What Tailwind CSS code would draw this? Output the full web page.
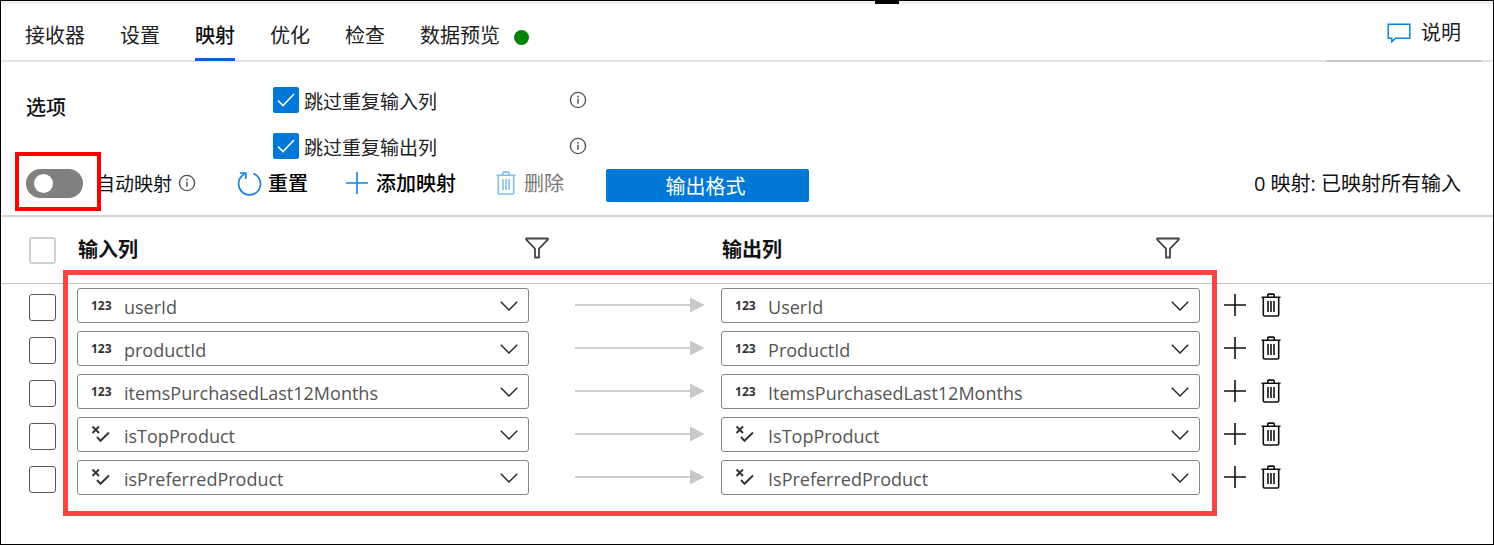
<!DOCTYPE html>
<html lang="zh-CN">
<head>
<meta charset="utf-8">
<meta name="viewport" content="width=device-width, initial-scale=1">
<title>映射</title>
<script src="https://cdn.jsdelivr.net/npm/@tailwindcss/browser@4"></script>
</head>
<body class="bg-white font-['Open_Sans','Noto_Sans_CJK_SC',sans-serif] text-[#222]">

<svg class="hidden" aria-hidden="true">
  <symbol id="info" viewBox="0 0 18 18" fill="none" stroke="currentColor"><circle cx="9" cy="9" r="7.6" stroke-width="1.4"/><path d="M9 7.8v5M9 4.8v1.6" stroke-width="1.5"/></symbol>
  <symbol id="plus" viewBox="0 0 22 22" fill="none" stroke="currentColor" stroke-width="1.6"><path d="M11 0v22M0 11h22"/></symbol>
  <symbol id="trash" viewBox="0 0 20 24" fill="none" stroke="currentColor" stroke-width="1.6"><path d="M.5 4.2h19M6.8 4V1.9q0-.8.8-.8h4.8q.8 0 .8.8V4M2.3 4.5v17.3q0 1.2 1.2 1.2h13q1.2 0 1.2-1.2V4.5M7 8v11M10 8v11M13 8v11"/></symbol>
  <symbol id="chevron" viewBox="0 0 18 10" fill="none" stroke="currentColor" stroke-width="1.4"><path d="M.8.8 9 9 17.2.8"/></symbol>
  <symbol id="funnel" viewBox="0 0 24 22" fill="none" stroke="currentColor" stroke-width="1.8" stroke-linejoin="round"><path d="M1.2 1.5h21.6v1.2L14 11.6v8.9h-4v-8.9L1.2 2.7z"/></symbol>
  <symbol id="arrow" viewBox="0 0 130 16"><path d="M0 8h116" stroke="#d0d0d0" stroke-width="2"/><path d="M115 .5 129.500 8 115 15.500z" fill="#c8c8c8"/></symbol>
  <symbol id="bool" viewBox="0 0 20 18" fill="none" stroke="currentColor" stroke-width="1.9"><path d="M1.500 1.500 8 8M8 1.500 1.500 8M6 12l3.500 3.800L18 7.500"/></symbol>
  <symbol id="tick" viewBox="0 0 18 14" fill="none" stroke="currentColor" stroke-width="1.6"><path d="m1 7.500 5 5L17 1"/></symbol>
</svg>

<div class="relative flex min-h-screen flex-col border border-black">
  <div class="h-[3px] bg-[#f1eff1]"></div>
  <div class="absolute left-[874px] top-0 h-[3px] w-6 bg-black"></div>

  <header class="flex h-[58px] items-stretch border-b-2 border-[#e2e2e2]">
    <nav class="-mb-px flex gap-[35px] pl-6 text-xl leading-[30px]">
      <a href="#" class="pt-[17px]">接收器</a>
      <a href="#" class="pt-[17px]">设置</a>
      <a href="#" aria-current="page" class="border-b-[3px] border-[#0a63c9] pt-[17px] font-medium text-[#111]">映射</a>
      <a href="#" class="pt-[17px]">优化</a>
      <a href="#" class="pt-[17px]">检查</a>
      <a href="#" class="flex items-start gap-[14px] pt-[17px]">数据预览<span class="mt-[9px] size-[15px] rounded-full bg-[#038303]"></span></a>
    </nav>
    <a href="#" class="-mb-[2px] ml-auto mr-[11px] flex w-[156px] items-start gap-[10px] border-b-2 border-[#c8c8c8] pl-[61px] pt-[14px] text-xl leading-[30px]">
      <svg class="mt-[5px] h-5 w-6 text-[#1182e0]" viewBox="0 0 24 20" fill="none" stroke="currentColor" stroke-width="1.500"><path d="M1.200 1.200h21.600v14H8.500L4.800 18.800v-3.600H1.200z"/></svg>
      说明
    </a>
  </header>

  <section class="flex pl-[25px] pt-[25px]">
    <h2 class="w-[247px] pt-[6px] text-xl font-medium leading-[30px] text-[#111]">选项</h2>
    <div class="flex flex-col gap-5">
      <div class="flex">
        <label class="flex w-[296px] gap-[5px] text-[19px] leading-[30px]">
          <span class="grid size-[26px] place-items-center">
            <input type="checkbox" checked class="col-start-1 row-start-1 size-[26px] appearance-none rounded-xs bg-[#0078d7]">
            <svg class="pointer-events-none col-start-1 row-start-1 h-[14px] w-[18px] text-white"><use href="#tick"/></svg>
          </span>
          <span class="h-[26px]">跳过重复输入列</span>
        </label>
        <svg class="mt-1 size-[18px] text-[#555]"><use href="#info"/></svg>
      </div>
      <div class="flex">
        <label class="flex w-[296px] gap-[5px] text-[19px] leading-[30px]">
          <span class="grid size-[26px] place-items-center">
            <input type="checkbox" checked class="col-start-1 row-start-1 size-[26px] appearance-none rounded-xs bg-[#0078d7]">
            <svg class="pointer-events-none col-start-1 row-start-1 h-[14px] w-[18px] text-white"><use href="#tick"/></svg>
          </span>
          <span class="h-[26px]">跳过重复输出列</span>
        </label>
        <svg class="mt-1 size-[18px] text-[#555]"><use href="#info"/></svg>
      </div>
    </div>
  </section>

  <section class="flex h-[56px] items-start pl-[25px] pr-8 pt-[10px] text-xl leading-[30px] whitespace-nowrap">
    <label class="relative flex text-[19px]">
      <input type="checkbox" role="switch" class="h-[29px] w-[57px] appearance-none rounded-full bg-[#808080] before:ml-2 before:mt-[5px] before:block before:size-[19px] before:rounded-full before:bg-white before:content-['']">
      <span class="pl-[13px] text-[#111]">自动映射</span>
      <span class="pointer-events-none absolute -left-[11px] -top-[17px] h-[59px] w-[86px] border-4 border-[#ff0000]"></span>
    </label>
    <svg class="ml-[6px] mt-[5px] size-[18px] text-[#555]"><use href="#info"/></svg>
    <button type="button" class="ml-[41px] flex gap-[6px] font-medium text-black">
      <svg class="mt-[2px] size-[25px] text-[#1182e0]" viewBox="0 0 25 25" fill="none" stroke="currentColor" stroke-width="1.700"><path d="M16.500 2.600A11 11 0 1 1 7.500 3.100M2.800 2h6v6"/></svg>
      重置
    </button>
    <button type="button" class="ml-[38px] flex gap-2 font-medium text-black">
      <svg class="mt-[3px] size-[22px] text-[#1182e0]"><use href="#plus"/></svg>
      添加映射
    </button>
    <button type="button" disabled class="ml-10 flex gap-2 text-[#777]">
      <svg class="mt-[2px] h-6 w-5 text-[#83bdee]"><use href="#trash"/></svg>
      删除
    </button>
    <button type="button" class="ml-[42px] h-[33px] w-[203px] rounded-xs bg-[#0078d7] pr-1 pt-[2px] text-white">输出格式</button>
    <p class="ml-auto text-[#111]">0 映射: 已映射所有输入</p>
  </section>

  <div class="relative">
    <table class="w-full table-fixed border-t-2 border-separate border-spacing-0 border-[#d4d4d4]">
      <colgroup><col class="w-[76px]"><col class="w-[30.3%]"><col class="w-[192px]"><col><col class="w-[293px]"></colgroup>
      <thead>
        <tr class="h-[67px] text-left text-xl leading-[30px] text-[#111] *:border-b *:border-[#c4c4c4]">
          <th class="p-0 pl-7"><input type="checkbox" aria-label="全选" class="block size-[27px] appearance-none rounded-[3px] border-2 border-[#d0d0d0]"></th>
          <th class="p-0 pl-px font-bold"><span class="flex items-center justify-between">输入列<button type="button" aria-label="筛选输入列" class="-mr-5 mb-1 text-[#444]"><svg class="block h-[22px] w-6"><use href="#funnel"/></svg></button></span></th>
          <th class="p-0"></th>
          <th class="p-0 pl-px font-bold"><span class="flex items-center justify-between pr-5">输出列<button type="button" aria-label="筛选输出列" class="mb-1 text-[#444]"><svg class="block h-[22px] w-6"><use href="#funnel"/></svg></button></span></th>
          <th class="p-0"></th>
        </tr>
      </thead>
      <tbody class="text-lg leading-[27px] text-[#555]">
        <tr class="h-[43px]">
          <td class="p-0 pl-7"><input type="checkbox" aria-label="选择 userId" class="mt-1 block size-[27px] appearance-none rounded-[3px] border border-[#555]"></td>
          <td class="p-0"><label class="flex h-[35px] items-center rounded-[3px] border border-[#858585] pl-3 pr-[10px]"><span class="w-[34px] pl-px text-xs font-bold text-[#333]">123</span><select aria-label="输入列 1" class="min-w-0 flex-1 appearance-none pt-[3px]"><option>userId</option></select><svg class="h-[10px] w-[18px] text-[#222]"><use href="#chevron"/></svg></label></td>
          <td class="p-0"><svg class="mb-[2px] ml-[46px] block h-4 w-[130px]"><use href="#arrow"/></svg></td>
          <td class="p-0"><label class="flex h-[35px] items-center rounded-[3px] border border-[#858585] pl-3 pr-[10px]"><span class="w-[34px] pl-px text-xs font-bold text-[#333]">123</span><select aria-label="输出列 1" class="min-w-0 flex-1 appearance-none pt-[3px]"><option>UserId</option></select><svg class="h-[10px] w-[18px] text-[#222]"><use href="#chevron"/></svg></label></td>
          <td class="p-0 pb-[2px]"><span class="flex items-center gap-[15px] pl-6 text-[#111]"><button type="button" aria-label="添加"><svg class="size-[22px]"><use href="#plus"/></svg></button><button type="button" aria-label="删除"><svg class="h-6 w-5"><use href="#trash"/></svg></button></span></td>
        </tr>
        <tr class="h-[43px]">
          <td class="p-0 pl-7"><input type="checkbox" aria-label="选择 productId" class="mt-1 block size-[27px] appearance-none rounded-[3px] border border-[#555]"></td>
          <td class="p-0"><label class="flex h-[35px] items-center rounded-[3px] border border-[#858585] pl-3 pr-[10px]"><span class="w-[34px] pl-px text-xs font-bold text-[#333]">123</span><select aria-label="输入列 2" class="min-w-0 flex-1 appearance-none pt-[3px]"><option>productId</option></select><svg class="h-[10px] w-[18px] text-[#222]"><use href="#chevron"/></svg></label></td>
          <td class="p-0"><svg class="mb-[2px] ml-[46px] block h-4 w-[130px]"><use href="#arrow"/></svg></td>
          <td class="p-0"><label class="flex h-[35px] items-center rounded-[3px] border border-[#858585] pl-3 pr-[10px]"><span class="w-[34px] pl-px text-xs font-bold text-[#333]">123</span><select aria-label="输出列 2" class="min-w-0 flex-1 appearance-none pt-[3px]"><option>ProductId</option></select><svg class="h-[10px] w-[18px] text-[#222]"><use href="#chevron"/></svg></label></td>
          <td class="p-0 pb-[2px]"><span class="flex items-center gap-[15px] pl-6 text-[#111]"><button type="button" aria-label="添加"><svg class="size-[22px]"><use href="#plus"/></svg></button><button type="button" aria-label="删除"><svg class="h-6 w-5"><use href="#trash"/></svg></button></span></td>
        </tr>
        <tr class="h-[43px]">
          <td class="p-0 pl-7"><input type="checkbox" aria-label="选择 itemsPurchasedLast12Months" class="mt-1 block size-[27px] appearance-none rounded-[3px] border border-[#555]"></td>
          <td class="p-0"><label class="flex h-[35px] items-center rounded-[3px] border border-[#858585] pl-3 pr-[10px]"><span class="w-[34px] pl-px text-xs font-bold text-[#333]">123</span><select aria-label="输入列 3" class="min-w-0 flex-1 appearance-none pt-[3px]"><option>itemsPurchasedLast12Months</option></select><svg class="h-[10px] w-[18px] text-[#222]"><use href="#chevron"/></svg></label></td>
          <td class="p-0"><svg class="mb-[2px] ml-[46px] block h-4 w-[130px]"><use href="#arrow"/></svg></td>
          <td class="p-0"><label class="flex h-[35px] items-center rounded-[3px] border border-[#858585] pl-3 pr-[10px]"><span class="w-[34px] pl-px text-xs font-bold text-[#333]">123</span><select aria-label="输出列 3" class="min-w-0 flex-1 appearance-none pt-[3px]"><option>ItemsPurchasedLast12Months</option></select><svg class="h-[10px] w-[18px] text-[#222]"><use href="#chevron"/></svg></label></td>
          <td class="p-0 pb-[2px]"><span class="flex items-center gap-[15px] pl-6 text-[#111]"><button type="button" aria-label="添加"><svg class="size-[22px]"><use href="#plus"/></svg></button><button type="button" aria-label="删除"><svg class="h-6 w-5"><use href="#trash"/></svg></button></span></td>
        </tr>
        <tr class="h-[43px]">
          <td class="p-0 pl-7"><input type="checkbox" aria-label="选择 isTopProduct" class="mt-1 block size-[27px] appearance-none rounded-[3px] border border-[#555]"></td>
          <td class="p-0"><label class="flex h-[35px] items-center rounded-[3px] border border-[#858585] pl-3 pr-[10px]"><span class="w-[34px] pl-px text-[#333]"><svg class="mb-[2px] block h-[18px] w-5"><use href="#bool"/></svg></span><select aria-label="输入列 4" class="min-w-0 flex-1 appearance-none pt-[3px]"><option>isTopProduct</option></select><svg class="h-[10px] w-[18px] text-[#222]"><use href="#chevron"/></svg></label></td>
          <td class="p-0"><svg class="mb-[2px] ml-[46px] block h-4 w-[130px]"><use href="#arrow"/></svg></td>
          <td class="p-0"><label class="flex h-[35px] items-center rounded-[3px] border border-[#858585] pl-3 pr-[10px]"><span class="w-[34px] pl-px text-[#333]"><svg class="mb-[2px] block h-[18px] w-5"><use href="#bool"/></svg></span><select aria-label="输出列 4" class="min-w-0 flex-1 appearance-none pt-[3px]"><option>IsTopProduct</option></select><svg class="h-[10px] w-[18px] text-[#222]"><use href="#chevron"/></svg></label></td>
          <td class="p-0 pb-[2px]"><span class="flex items-center gap-[15px] pl-6 text-[#111]"><button type="button" aria-label="添加"><svg class="size-[22px]"><use href="#plus"/></svg></button><button type="button" aria-label="删除"><svg class="h-6 w-5"><use href="#trash"/></svg></button></span></td>
        </tr>
        <tr class="h-[43px]">
          <td class="p-0 pl-7"><input type="checkbox" aria-label="选择 isPreferredProduct" class="mt-1 block size-[27px] appearance-none rounded-[3px] border border-[#555]"></td>
          <td class="p-0"><label class="flex h-[35px] items-center rounded-[3px] border border-[#858585] pl-3 pr-[10px]"><span class="w-[34px] pl-px text-[#333]"><svg class="mb-[2px] block h-[18px] w-5"><use href="#bool"/></svg></span><select aria-label="输入列 5" class="min-w-0 flex-1 appearance-none pt-[3px]"><option>isPreferredProduct</option></select><svg class="h-[10px] w-[18px] text-[#222]"><use href="#chevron"/></svg></label></td>
          <td class="p-0"><svg class="mb-[2px] ml-[46px] block h-4 w-[130px]"><use href="#arrow"/></svg></td>
          <td class="p-0"><label class="flex h-[35px] items-center rounded-[3px] border border-[#858585] pl-3 pr-[10px]"><span class="w-[34px] pl-px text-[#333]"><svg class="mb-[2px] block h-[18px] w-5"><use href="#bool"/></svg></span><select aria-label="输出列 5" class="min-w-0 flex-1 appearance-none pt-[3px]"><option>IsPreferredProduct</option></select><svg class="h-[10px] w-[18px] text-[#222]"><use href="#chevron"/></svg></label></td>
          <td class="p-0 pb-[2px]"><span class="flex items-center gap-[15px] pl-6 text-[#111]"><button type="button" aria-label="添加"><svg class="size-[22px]"><use href="#plus"/></svg></button><button type="button" aria-label="删除"><svg class="h-6 w-5"><use href="#trash"/></svg></button></span></td>
        </tr>
      </tbody>
    </table>
    <div class="pointer-events-none absolute -bottom-[17px] left-[62px] right-[276px] top-[55px] border-[5px] border-[#ff4343]"></div>
  </div>
</div>
</body>
</html>
